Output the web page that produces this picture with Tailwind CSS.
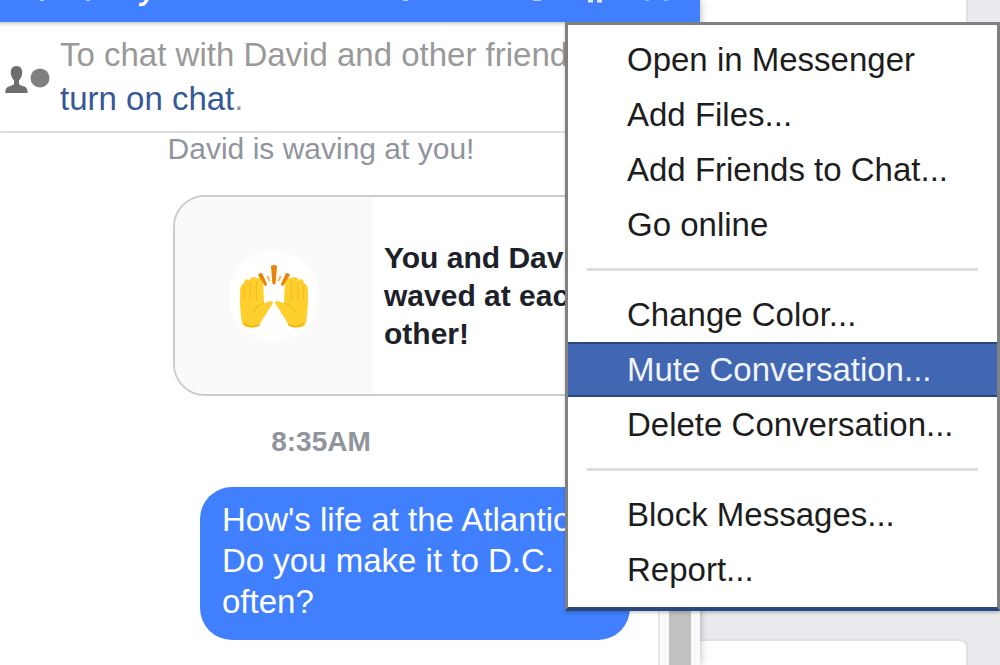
<!DOCTYPE html>
<html lang="en">
<head>
<meta charset="utf-8">
<title>Chat</title>
<script src="https://cdn.jsdelivr.net/npm/@tailwindcss/browser@4"></script>
</head>
<body class="bg-[#e8eaee] font-['Liberation_Sans',Arial,sans-serif]">
<main class="relative flex h-screen overflow-hidden">
  <section class="relative z-10 flex w-[70%] flex-col bg-white shadow-[0_0_8px_rgba(0,0,0,0.3)]" aria-label="Conversation">
    <header class="h-[22px] shrink-0 bg-[#4080ff]">
      <svg class="block h-2 w-[700px]" viewBox="0 0 700 8" fill="none" stroke="#fff" aria-hidden="true">
        <path d="M148 -2 L145.500 2 Q144 5 139 4.500" stroke-width="3.500"/>
        <path d="M40 0h4M86 0h4M403 0h5M533 0h8" stroke-width="2" opacity=".6"/>
        <path d="M588 0.500h5M597 0.500h5" stroke-width="4" opacity=".85"/>
        <path d="M645 0h4M664 0h4" stroke-width="2" opacity=".4"/>
      </svg>
    </header>
    <div class="flex shrink-0 items-center gap-[10px] border-b-2 border-[#dddddd] pt-[11px] pb-[10px] pl-[5px] shadow-[inset_0_5px_4px_-4px_rgba(0,0,0,0.3)]">
      <svg class="h-[34px] w-[45px] shrink-0" viewBox="0 0 45 34" aria-hidden="true">
        <path d="M11.500 6C7.500 6 5.500 9 5.800 13c.2 3.500 1.600 5.500 3.200 7.300v3.200c0 1.300-1.200 1.700-3 2.300C2.500 27 .5 27.500.3 33h22.400c-.2-5.500-2.200-6-5.700-7.200-1.800-.6-3-1-3-2.300v-3.200c1.600-1.800 3-3.800 3.200-7.300C17.500 9 15.500 6 11.500 6z" fill="#6e6e6e"/>
        <circle cx="35" cy="18" r="9.500" fill="#808080"/>
      </svg>
      <p class="text-[33px] leading-[44px] whitespace-nowrap text-[#999999]">To chat with David and other friends,<br><a href="#" class="text-[#365899]">turn on chat</a>.</p>
    </div>
    <div class="flex min-h-0 flex-1">
      <div class="flex min-w-0 flex-1 flex-col">
        <p class="pr-4 text-center text-[30px] leading-8 text-[#90949c]">David is waving at you!</p>
        <article class="mt-[30px] mr-7 ml-[173px] flex h-[201px] shrink-0 overflow-hidden rounded-[32px] border-2 border-[#cccccc]">
          <div class="flex w-[197px] shrink-0 items-center justify-center bg-[#fafafa]">
            <svg class="size-[90px]" viewBox="0 0 90 90" role="img" aria-label="Raised hands">
              <circle cx="45" cy="45" r="45" fill="#fff"/>
              <g id="hand">
                <path d="M11 42c0-5 1-9 4-9.500 0-4 3-5 5.500-3.500 1-3 5-4 7-1.500 3-1 5 0 5 2 1.500.5 1.800 2 1.800 4l.7 19 6-2.500c2-.5 3.500 1 2.500 3-4 6-8 12-12 19-1 2-2 3.500-4 4-4 1-9 1-12-1-2-1-2.500-3-3-6-1-9-2-18-1.500-27z" fill="#ffd02d"/>
                <path d="M15.500 35v13M21 32v17M27.500 31v18M35 52c-5 2-9 5-11 9" fill="none" stroke="#f4bd24" stroke-width="1.200" stroke-linecap="round"/>
                <path d="M15 72c3 4 12 4.500 16 1.500" fill="none" stroke="#f3b21c" stroke-width="1.500"/>
              </g>
              <use href="#hand" transform="matrix(-1 0 0 1 90 0)"/>
              <g fill="#e98309">
                <path d="M42 15q3-2 6 0l-1.300 17q-1.700 3-3.400 0z"/>
                <path d="M29 24q1.500-2.500 4-2l5 11q0 2-2 2z"/>
                <path d="M61 24q-1.500-2.500-4-2l-5 11q0 2 2 2z"/>
              </g>
              <path d="M38.500 25.500l2 4M51.500 25.500l-2 4" stroke="#f7bb62" stroke-width="2" stroke-linecap="round"/>
            </svg>
          </div>
          <p class="self-center pl-3 text-[30px] leading-[38px] font-bold whitespace-nowrap text-[#1d2129]">You and David<br>waved at each<br>other!</p>
        </article>
        <time class="mt-8 pr-4 text-center text-[28px] leading-7 font-bold text-[#90949c]">8:35AM</time>
        <p class="mt-[31px] mr-7 ml-[200px] shrink-0 rounded-[32px] bg-[#4080ff] pt-3 pb-[18px] pl-[22px] text-[33px] leading-[41px] whitespace-nowrap text-white">How's life at the Atlantic?<br>Do you make it to D.C.<br>often?</p>
      </div>
      <div class="flex w-[42px] shrink-0 justify-center border-l-2 border-[#e8e8e8] bg-[#fafafa]" aria-hidden="true">
        <div class="w-[22px] bg-[#c1c1c1]"></div>
      </div>
    </div>
  </section>
  <aside class="flex flex-1 flex-col justify-between pr-8" aria-hidden="true">
    <div class="h-[560px] border-r-2 border-[#dddfe2] bg-white"></div>
    <div class="h-[26px] rounded-tr-lg border-t-2 border-r-2 border-[#dfe1e5] bg-white"></div>
  </aside>
  <nav class="absolute top-[22px] right-0 z-20 w-[435px] border-3 border-b-4 border-[#808080] border-b-[#29487d] bg-white pt-[7px] pb-[10px] text-[33px] leading-[55px] text-[#1d1d1d] shadow-[0_2px_3px_rgba(0,0,0,0.2)]" aria-label="Conversation options">
    <button class="block w-full pl-[59px] text-left">Open in Messenger</button>
    <button class="block w-full pl-[59px] text-left">Add Files...</button>
    <button class="block w-full pl-[59px] text-left">Add Friends to Chat...</button>
    <button class="block w-full pl-[59px] text-left">Go online</button>
    <hr class="mx-[19px] my-4 border-t-3 border-[#dddddd]">
    <button class="block w-full pl-[59px] text-left">Change Color...</button>
    <button class="block w-full border-y-2 border-[#29487d] bg-[#4267b2] pl-[59px] text-left leading-[51px] text-[#f0f4ff]">Mute Conversation...</button>
    <button class="block w-full pl-[59px] text-left">Delete Conversation...</button>
    <hr class="mx-[19px] my-4 border-t-3 border-[#dddddd]">
    <button class="block w-full pl-[59px] text-left">Block Messages...</button>
    <button class="block w-full pl-[59px] text-left">Report...</button>
  </nav>
</main>
</body>
</html>
